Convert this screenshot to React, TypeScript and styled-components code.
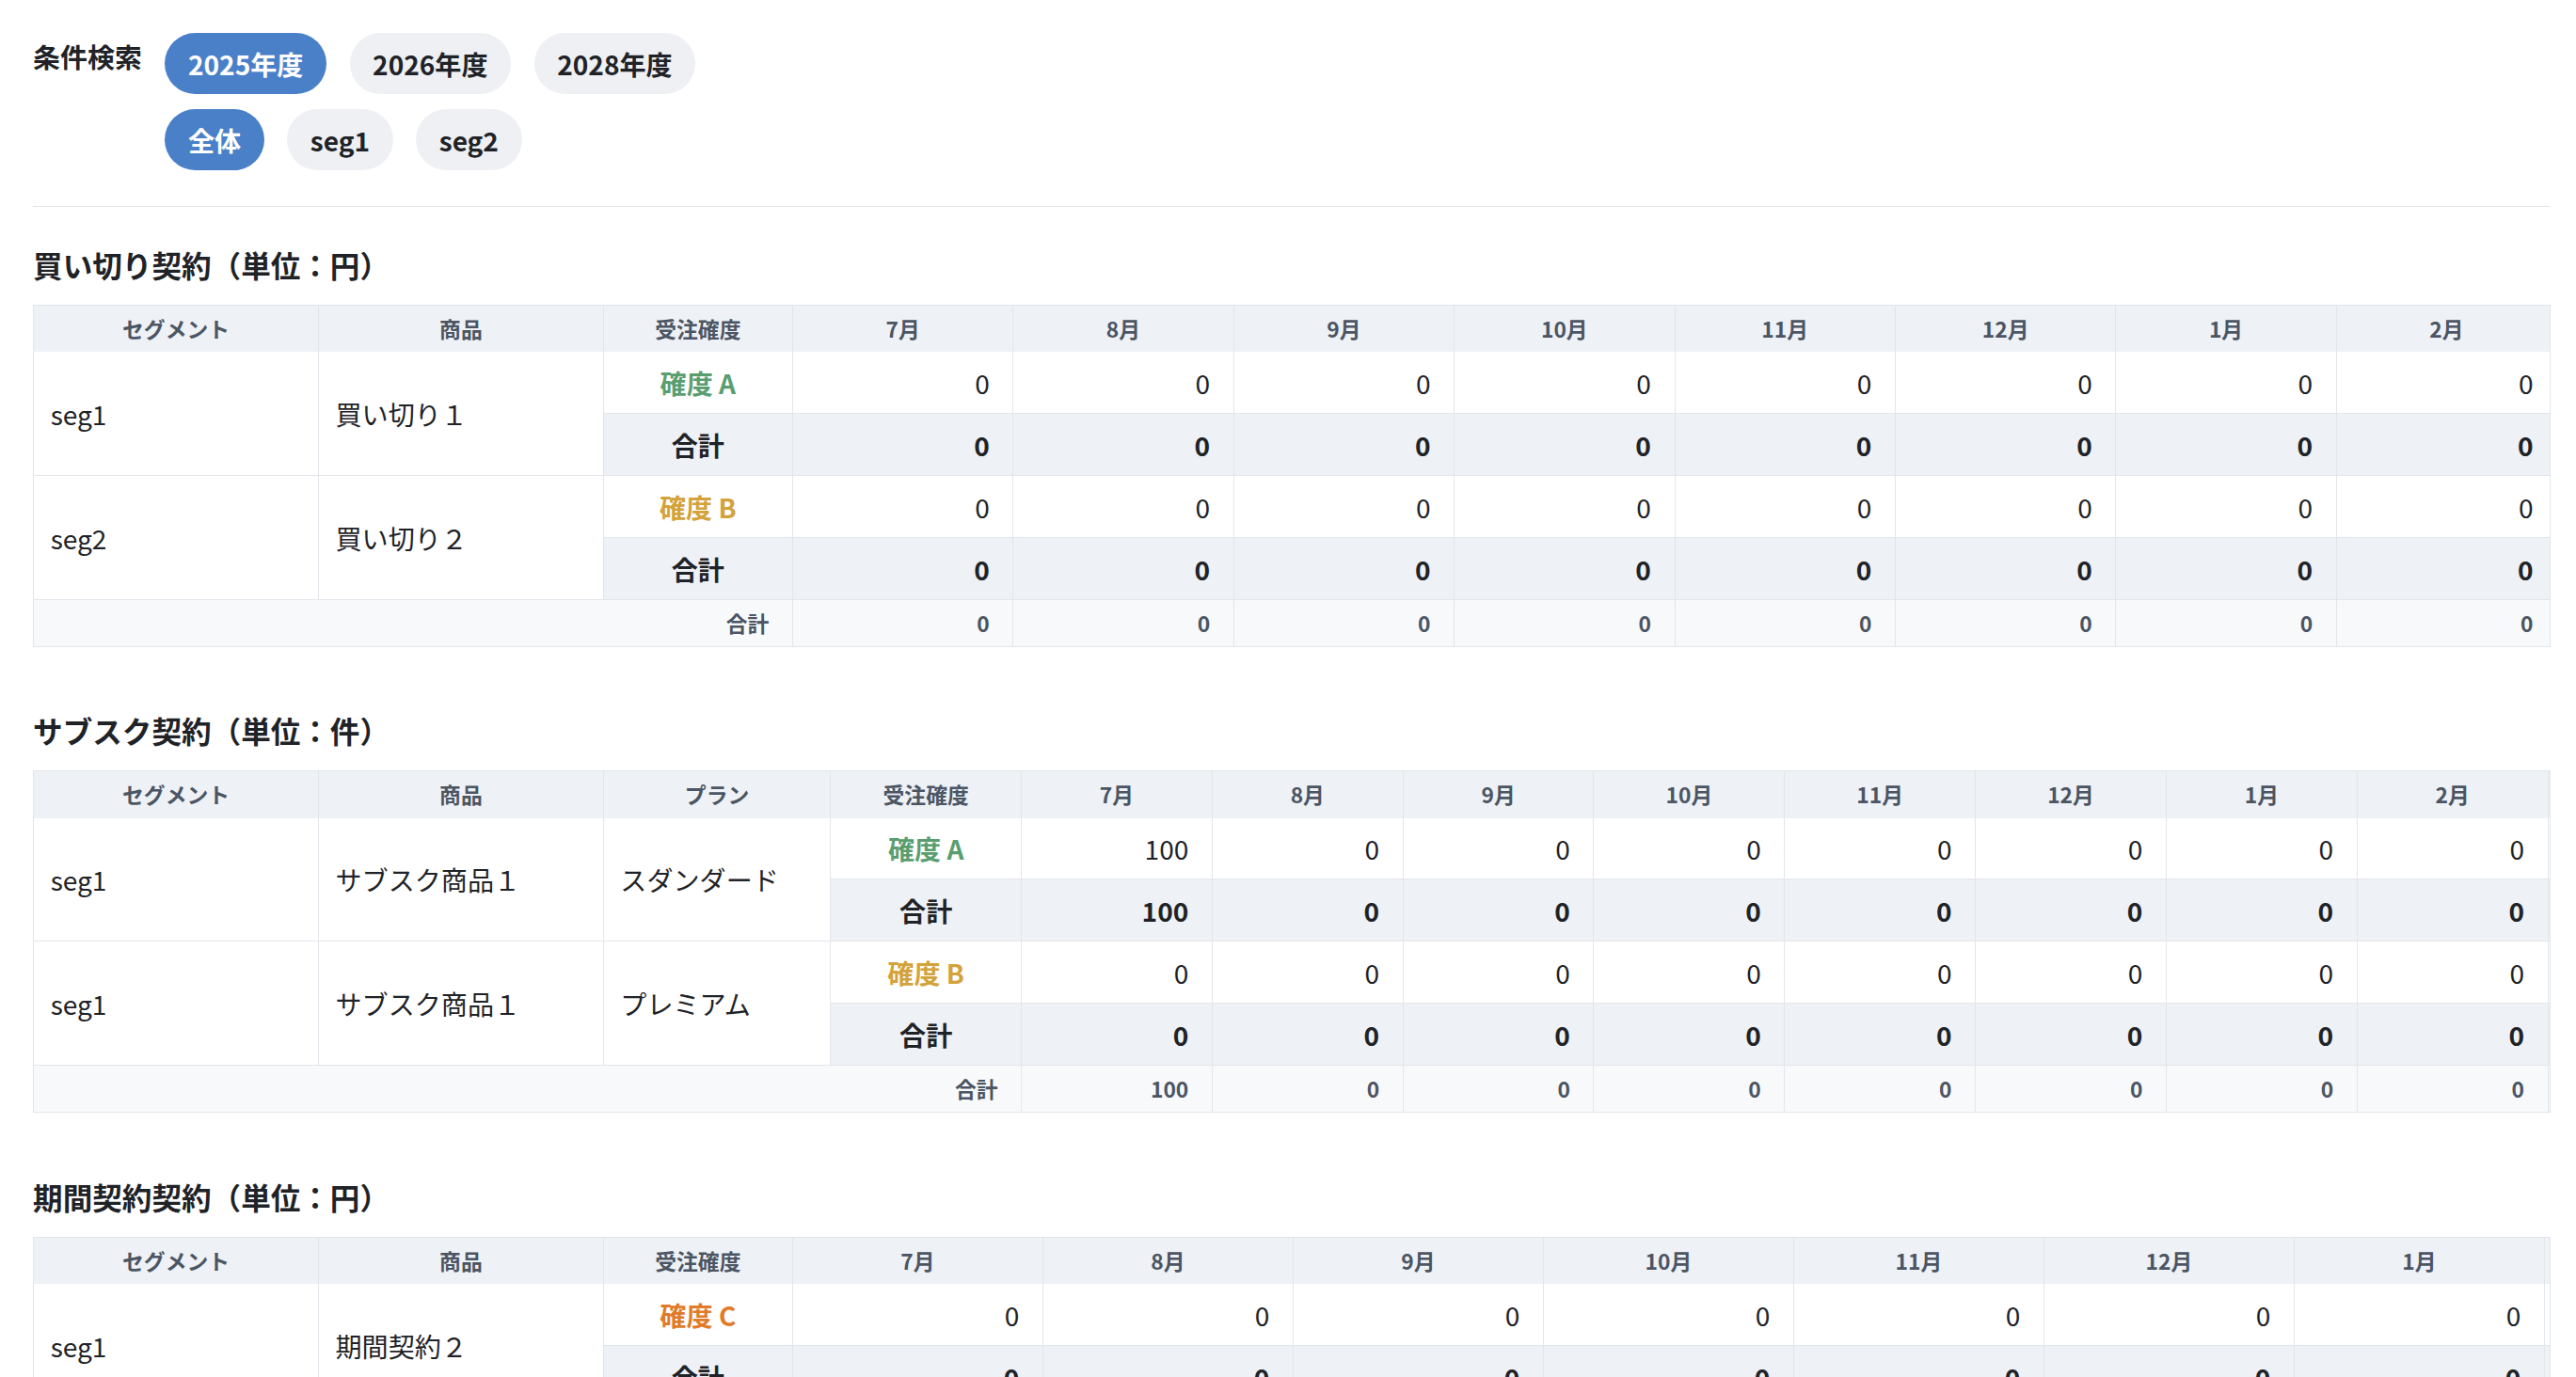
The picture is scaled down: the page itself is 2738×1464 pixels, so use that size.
import React from "react";
import styled, { createGlobalStyle } from "styled-components";

const Global = createGlobalStyle`
  html, body { margin: 0; padding: 0; background: #fff; height: 100%; overflow: hidden; }
  body { zoom: 1.755; font-family: "Noto Sans CJK JP", "Noto Sans", sans-serif; color: #1f2328; }
`;

const Page = styled.div`padding: 20px 16px 40px 20px; width: 1525px;`;
const Filter = styled.div`display: flex; gap: 14px; padding-bottom: 22px; border-bottom: 1px solid #e2e6ea;`;
const FilterLabel = styled.div`font-size: 16.5px; font-weight: 700; line-height: 28px; white-space: nowrap;`;
const PillRows = styled.div`display: flex; flex-direction: column; gap: 9px;`;
const PillRow = styled.div`display: flex; gap: 14px;`;
const Pill = styled.div<{ $active?: boolean }>`
  height: 37px; padding: 0 14px; border-radius: 19px; display: flex; align-items: center;
  font-size: 16px; font-weight: 600;
  background: ${p => (p.$active ? "#4a80c8" : "#eef0f3")};
  color: ${p => (p.$active ? "#fff" : "#1f2328")};
`;
const Title = styled.h2`font-size: 18px; font-weight: 700; margin: 22px 0 11px; line-height: 26px;`;
const Scroll = styled.div`
  overflow-x: auto; border: 1px solid #e2e6ea; margin-bottom: 38px;
  &::-webkit-scrollbar { display: none; }
`;
const Table = styled.table<{ $w: number }>`
  border-collapse: collapse; table-layout: fixed; width: ${p => p.$w}px; min-width: ${p => p.$w}px;
`;
const Th = styled.th<{ $w: number }>`
  width: ${p => p.$w}px; height: 28px; padding: 0; background: #eef1f6; color: #4b5563;
  font-size: 13px; font-weight: 700; border-right: 1px solid #e2e6ea; text-align: center;
`;
const Td = styled.td<{ $sub?: boolean; $left?: boolean }>`
  height: 37px; padding: 0 ${p => (p.$left ? "10px" : "14px")}; font-size: 16px;
  border: 1px solid #e2e6ea; border-top: 0; border-left: 0;
  text-align: ${p => (p.$left ? "left" : "right")};
  background: ${p => (p.$sub ? "#eef1f6" : "#fff")};
  font-weight: ${p => (p.$sub ? 700 : 400)};
  white-space: nowrap;
`;
const Grade = styled(Td)<{ $c: string }>`text-align: center; color: ${p => p.$c}; font-weight: 700;`;
const SubLabel = styled(Td)`text-align: center;`;
const Foot = styled.td`
  height: 28px; padding: 0 14px; background: #f8f9fb; color: #4b5563; font-size: 13px; font-weight: 700;
  text-align: right; border-right: 1px solid #e2e6ea;
`;

const months = ["7月", "8月", "9月", "10月", "11月", "12月", "1月", "2月", "3月", "4月", "5月", "6月", "合計"];
const colors: Record<string, string> = { A: "#5a9e6f", B: "#d4a23a", C: "#e07b2a" };

type Row = { seg: string; prod: string; plan?: string; g: string; vals: number[] };

function Section({ title, rows, widths, mw }: { title: string; rows: Row[]; widths: number[]; mw: number }) {
  const hasPlan = rows[0].plan !== undefined;
  const heads = hasPlan ? ["セグメント", "商品", "プラン", "受注確度"] : ["セグメント", "商品", "受注確度"];
  const totals = months.map((_, i) => rows.reduce((s, r) => s + (r.vals[i] ?? 0), 0));
  const total = widths.reduce((a, b) => a + b, 0) + mw * months.length;
  return (
    <>
      <Title>{title}</Title>
      <Scroll>
        <Table $w={total}>
          <thead>
            <tr>
              {heads.map((h, i) => <Th key={h} $w={widths[i]}>{h}</Th>)}
              {months.map(m => <Th key={m} $w={mw}>{m}</Th>)}
            </tr>
          </thead>
          <tbody>
            {rows.map((r, ri) => (
              <React.Fragment key={ri}>
                <tr>
                  <Td $left rowSpan={2}>{r.seg}</Td>
                  <Td $left rowSpan={2}>{r.prod}</Td>
                  {hasPlan && <Td $left rowSpan={2}>{r.plan}</Td>}
                  <Grade $c={colors[r.g]}>確度 {r.g}</Grade>
                  {months.map((m, i) => <Td key={m}>{r.vals[i] ?? 0}</Td>)}
                </tr>
                <tr>
                  <SubLabel $sub>合計</SubLabel>
                  {months.map((m, i) => <Td $sub key={m}>{r.vals[i] ?? 0}</Td>)}
                </tr>
              </React.Fragment>
            ))}
            <tr>
              <Foot colSpan={heads.length}>合計</Foot>
              {totals.map((t, i) => <Foot key={i}>{t}</Foot>)}
            </tr>
          </tbody>
        </Table>
      </Scroll>
    </>
  );
}

export default function App() {
  return (
    <Page>
      <Global />
      <Filter>
        <FilterLabel>条件検索</FilterLabel>
        <PillRows>
          <PillRow>
            <Pill $active>2025年度</Pill>
            <Pill>2026年度</Pill>
            <Pill>2028年度</Pill>
          </PillRow>
          <PillRow>
            <Pill $active>全体</Pill>
            <Pill>seg1</Pill>
            <Pill>seg2</Pill>
          </PillRow>
        </PillRows>
      </Filter>
      <Section
        title="買い切り契約（単位：円）"
        widths={[172, 172, 114]}
        mw={133}
        rows={[
          { seg: "seg1", prod: "買い切り１", g: "A", vals: [] },
          { seg: "seg2", prod: "買い切り２", g: "B", vals: [] },
        ]}
      />
      <Section
        title="サブスク契約（単位：件）"
        widths={[172, 172, 137, 115]}
        mw={115}
        rows={[
          { seg: "seg1", prod: "サブスク商品１", plan: "スダンダード", g: "A", vals: [100] },
          { seg: "seg1", prod: "サブスク商品１", plan: "プレミアム", g: "B", vals: [] },
        ]}
      />
      <Section
        title="期間契約契約（単位：円）"
        widths={[172, 172, 114]}
        mw={151}
        rows={[
          { seg: "seg1", prod: "期間契約２", g: "C", vals: [] },
          { seg: "seg2", prod: "期間契約１", g: "A", vals: [] },
        ]}
      />
    </Page>
  );
}
